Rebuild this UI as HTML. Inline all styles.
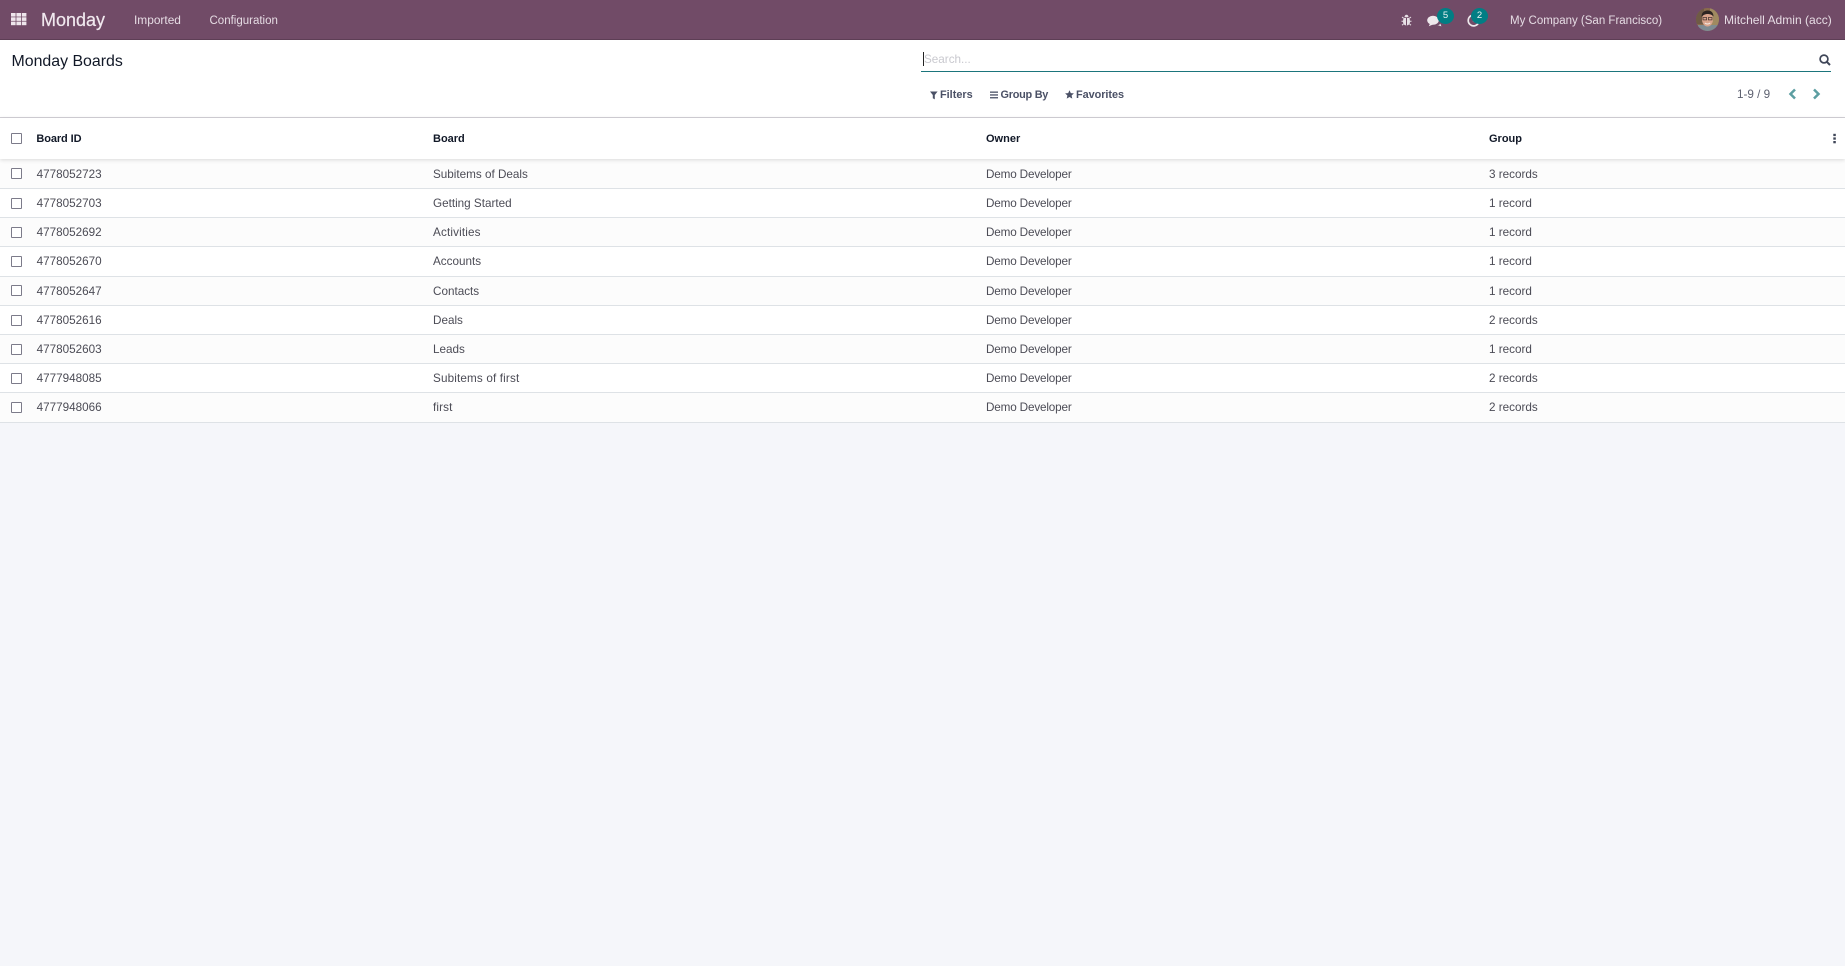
<!DOCTYPE html>
<html><head><meta charset="utf-8"><title>Monday Boards</title>
<style>
html,body{margin:0;padding:0;width:1845px;height:966px;overflow:hidden;background:#f5f6fa;font-family:"Liberation Sans",Arial,sans-serif;}
.a{position:absolute;white-space:nowrap;line-height:16px;}
.nav{position:absolute;left:0;top:0;width:1845px;height:39px;background:#714b67;border-bottom:1px solid #5d3e55;}
.n{color:#e6dce4;font-size:11.9px;top:12px;}
.cp{position:absolute;left:0;top:40px;width:1845px;height:77px;background:#fff;border-bottom:1px solid #d3d1d7;}
.th{position:absolute;left:0;top:118px;width:1845px;height:41px;background:#fff;box-shadow:0 1px 4px rgba(0,0,0,.14);z-index:2;}
.h{color:#111827;font-weight:bold;font-size:11px;top:131px;z-index:3;}
.row{position:absolute;left:0;width:1845px;border-bottom:1px solid #dee2e6;box-sizing:border-box;}
.t{color:#4c4c56;font-size:11.7px;z-index:3;}
.d{letter-spacing:-.15px;}
.s{letter-spacing:.15px;}
.cb{position:absolute;left:11px;width:11px;height:11px;box-sizing:border-box;border:1px solid #7c7b8a;background:#fff;border-radius:1px;z-index:3;}
.fb{color:#4b5166;font-size:10.9px;font-weight:bold;top:87px;}
</style></head><body>
<div class="nav"></div>
<svg class="a" style="left:11px;top:13px" width="16" height="13" viewBox="0 0 16 13" fill="#eee6ec"><rect x="0" y="0" width="4.6" height="3.6"/><rect x="5.4" y="0" width="4.6" height="3.6"/><rect x="10.8" y="0" width="4.6" height="3.6"/><rect x="0" y="4.3" width="4.6" height="3.6"/><rect x="5.4" y="4.3" width="4.6" height="3.6"/><rect x="10.8" y="4.3" width="4.6" height="3.6"/><rect x="0" y="8.6" width="4.6" height="3.6"/><rect x="5.4" y="8.6" width="4.6" height="3.6"/><rect x="10.8" y="8.6" width="4.6" height="3.6"/></svg>
<div class="a" style="left:41px;top:10px;font-size:18px;line-height:20px;color:#f1e9ef;-webkit-text-stroke:.2px #f1e9ef">Monday</div>
<div class="a n" style="left:134px">Imported</div>
<div class="a n" style="left:209.5px;top:13px;font-size:11.5px">Configuration</div>

<svg class="a" style="left:1401px;top:14px" width="11" height="12" viewBox="0 0 11 12"><path d="M3.5 3.2C3.5 1.6 4.4.8 5.5.8s2 .8 2 2.4zM2.8 4h5.4c.6 1.2.8 2.4.8 3.6 0 2.3-1.4 3.8-3.5 3.8S2 9.9 2 7.6C2 6.4 2.2 5.2 2.8 4z" fill="#e8e0e6"/><path d="M5.5 4v7.4" stroke="#714b67" stroke-width="1" fill="none"/><path d="M2.6 4.2L1 3M8.4 4.2L10 3M2 7.2H.5M9 7.2h1.500M2.500 10L1 11.200M8.500 10l1.500 1.200" stroke="#e8e0e6" stroke-width="1" fill="none"/></svg>

<svg class="a" style="left:1427px;top:14px" width="15" height="13" viewBox="0 0 15 13"><ellipse cx="6" cy="6.3" rx="5.8" ry="4.5" fill="#eee8ec"/><path d="M3 9.5L1.8 12.2 6 10.5z" fill="#eee8ec"/><path d="M8.6 11.600c2.200 0 3.800-.8 4.800-2l1 2.800-3-1z" fill="#eee8ec"/></svg>
<div class="a" style="left:1437px;top:8px;width:17px;height:16px;border-radius:50%;background:#017e84;color:#e9f3f3;font-size:9.5px;line-height:16px;text-align:center;">5</div>

<svg class="a" style="left:1466px;top:13px" width="15" height="15" viewBox="0 0 15 15"><path d="M5.5 2.5A5.4 5.4 0 1 0 12.8 9" fill="none" stroke="#eee8ec" stroke-width="1.7"/><path d="M7 7.6L10.8 9" stroke="#eee8ec" stroke-width="1.5" fill="none"/></svg>
<div class="a" style="left:1471px;top:8px;width:17px;height:16px;border-radius:50%;background:#017e84;color:#e9f3f3;font-size:9.5px;line-height:15px;text-align:center;">2</div>

<div class="a n" style="left:1510px;top:13px;font-size:11.5px">My Company (San Francisco)</div>

<svg class="a" style="left:1696px;top:8px" width="23" height="23" viewBox="0 0 23 23"><defs><clipPath id="c"><circle cx="11.5" cy="11.5" r="11.5"/></clipPath></defs><g clip-path="url(#c)"><rect width="23" height="23" fill="#8a6b4c"/><rect x="14" y="0" width="9" height="18" fill="#a08a60"/><rect x="0" y="0" width="8" height="16" fill="#6f5a45"/><rect x="2" y="17" width="20" height="6" fill="#7f8b92"/><ellipse cx="11.5" cy="11.5" rx="5.5" ry="7" fill="#d9a48d"/><path d="M5.5 9C5.500 3.500 9 2.500 12 2.500c3.500 0 5.500 2.500 5.500 6-1.500-2-4-2.500-6-2.500S7 7 5.500 9z" fill="#2d2522"/><rect x="7" y="9.5" width="3.6" height="2.4" fill="none" stroke="#3b2e2b" stroke-width=".7"/><rect x="12.4" y="9.5" width="3.6" height="2.4" fill="none" stroke="#3b2e2b" stroke-width=".7"/><path d="M8.8 15c1.600 1.200 3.800 1.200 5.400 0" stroke="#f4ebe6" stroke-width="1" fill="none"/></g></svg>
<div class="a n" style="left:1724px;font-size:12.05px">Mitchell Admin (acc)</div>

<div class="cp"></div>
<div class="a" style="left:11.5px;top:52px;font-size:15.9px;line-height:20px;color:#111827">Monday Boards</div>
<div class="a" style="left:921px;top:71px;width:910px;height:1px;background:#1b757c"></div>
<div class="a" style="left:923px;top:52px;width:1px;height:14px;background:#222"></div>
<div class="a" style="left:924px;top:52px;font-size:11.7px;color:#c9c9cf">Search...</div>
<svg class="a" style="left:1819px;top:54px" width="12" height="12" viewBox="0 0 12 12"><circle cx="5" cy="5" r="3.9" fill="none" stroke="#3f4658" stroke-width="1.7"/><path d="M7.9 7.9L11 11" stroke="#3f4658" stroke-width="2"/></svg>

<svg class="a" style="left:930px;top:91px" width="8" height="9" viewBox="0 0 8 9"><path d="M0 .5h7.6L4.800 4v4.400L2.800 7.200V4z" fill="#4b5166"/></svg>
<div class="a fb" style="left:940px">Filters</div>
<svg class="a" style="left:990px;top:91px" width="8" height="8" viewBox="0 0 8 8" fill="#4b5166"><rect y=".5" width="8" height="1.3"/><rect y="3.3" width="8" height="1.3"/><rect y="6.1" width="8" height="1.3"/></svg>
<div class="a fb" style="left:1000.5px;letter-spacing:-.25px">Group By</div>
<svg class="a" style="left:1065px;top:90px" width="9" height="9" viewBox="0 0 9 9"><path d="M4.500.2l1.300 2.900 3.100.3-2.300 2.100.7 3.100-2.800-1.600-2.800 1.600.7-3.100L.1 3.400l3.100-.3z" fill="#4b5166"/></svg>
<div class="a fb" style="left:1076px;letter-spacing:-.05px">Favorites</div>

<div class="a" style="left:1737px;top:87px;font-size:11.7px;color:#5d6170">1-9 / 9</div>
<svg class="a" style="left:1788px;top:88px" width="9" height="12" viewBox="0 0 9 12"><path d="M7 1.500L2.500 6 7 10.500" fill="none" stroke="#5c9ea1" stroke-width="2.500"/></svg>
<svg class="a" style="left:1812px;top:88px" width="9" height="12" viewBox="0 0 9 12"><path d="M2 1.500L6.500 6 2 10.500" fill="none" stroke="#5c9ea1" stroke-width="2.500"/></svg>

<div class="th"></div>
<div class="cb" style="top:133px"></div>
<div class="a h" style="left:36.4px;letter-spacing:-.1px">Board ID</div>
<div class="a h" style="left:433px">Board</div>
<div class="a h" style="left:986px">Owner</div>
<div class="a h" style="left:1489px">Group</div>
<svg class="a" style="left:1833px;top:133px;z-index:3" width="3" height="11" viewBox="0 0 3 11" fill="#3f4658"><rect x=".3" y=".8" width="2.5" height="2.3"/><rect x=".3" y="4.4" width="2.5" height="2.3"/><rect x=".3" y="8" width="2.5" height="2.3"/></svg>

<div class="row" style="top:159px;height:30px;background:#fcfcfc"></div>
<div class="row" style="top:189px;height:29px;background:#fff"></div>
<div class="row" style="top:218px;height:29px;background:#fcfcfc"></div>
<div class="row" style="top:247px;height:30px;background:#fff"></div>
<div class="row" style="top:277px;height:29px;background:#fcfcfc"></div>
<div class="row" style="top:306px;height:29px;background:#fff"></div>
<div class="row" style="top:335px;height:29px;background:#fcfcfc"></div>
<div class="row" style="top:364px;height:29px;background:#fff"></div>
<div class="row" style="top:393px;height:30px;background:#fcfcfc"></div>

<div class="cb" style="top:168px"></div><div class="a t" style="left:36.6px;top:167px">4778052723</div><div class="a t" style="left:433px;top:167px">Subitems of Deals</div><div class="a t d" style="left:986px;top:167px">Demo Developer</div><div class="a t" style="left:1489px;top:167px">3 records</div>
<div class="cb" style="top:198px"></div><div class="a t" style="left:36.6px;top:196px">4778052703</div><div class="a t" style="left:433px;top:196px">Getting Started</div><div class="a t d" style="left:986px;top:196px">Demo Developer</div><div class="a t" style="left:1489px;top:196px">1 record</div>
<div class="cb" style="top:227px"></div><div class="a t" style="left:36.6px;top:225px">4778052692</div><div class="a t s" style="left:433px;top:225px">Activities</div><div class="a t d" style="left:986px;top:225px">Demo Developer</div><div class="a t" style="left:1489px;top:225px">1 record</div>
<div class="cb" style="top:256px"></div><div class="a t" style="left:36.6px;top:254px">4778052670</div><div class="a t" style="left:433px;top:254px">Accounts</div><div class="a t d" style="left:986px;top:254px">Demo Developer</div><div class="a t" style="left:1489px;top:254px">1 record</div>
<div class="cb" style="top:285px"></div><div class="a t" style="left:36.6px;top:284px">4778052647</div><div class="a t" style="left:433px;top:284px">Contacts</div><div class="a t d" style="left:986px;top:284px">Demo Developer</div><div class="a t" style="left:1489px;top:284px">1 record</div>
<div class="cb" style="top:315px"></div><div class="a t" style="left:36.6px;top:313px">4778052616</div><div class="a t" style="left:433px;top:313px">Deals</div><div class="a t d" style="left:986px;top:313px">Demo Developer</div><div class="a t" style="left:1489px;top:313px">2 records</div>
<div class="cb" style="top:344px"></div><div class="a t" style="left:36.6px;top:342px">4778052603</div><div class="a t" style="left:433px;top:342px">Leads</div><div class="a t d" style="left:986px;top:342px">Demo Developer</div><div class="a t" style="left:1489px;top:342px">1 record</div>
<div class="cb" style="top:373px"></div><div class="a t" style="left:36.6px;top:371px">4777948085</div><div class="a t s" style="left:433px;top:371px">Subitems of first</div><div class="a t d" style="left:986px;top:371px">Demo Developer</div><div class="a t" style="left:1489px;top:371px">2 records</div>
<div class="cb" style="top:402px"></div><div class="a t" style="left:36.6px;top:400px">4777948066</div><div class="a t s" style="left:433px;top:400px">first</div><div class="a t d" style="left:986px;top:400px">Demo Developer</div><div class="a t" style="left:1489px;top:400px">2 records</div>
</body></html>
